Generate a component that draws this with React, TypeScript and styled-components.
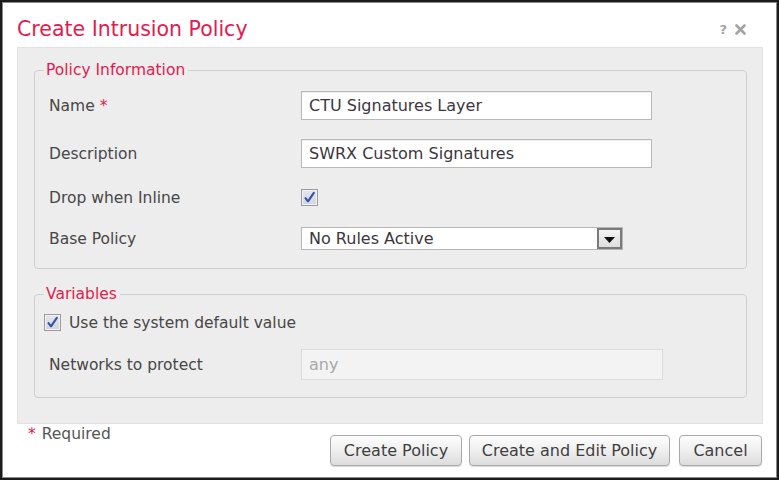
import React from "react";
import styled, { createGlobalStyle } from "styled-components";

const GlobalStyle = createGlobalStyle`
  html, body { margin: 0; padding: 0; background: #ffffff; }
  body { font-family: "DejaVu Sans", Verdana, sans-serif; }
  * { box-sizing: border-box; }
`;

const CRIMSON = "#e31b4f";

const Frame = styled.div`
  width: 779px;
  height: 480px;
  border: 2px solid #1b1b1b;
  box-shadow: inset 0 0 0 1px #8a8a8a;
  background: #ffffff;
  display: flex;
  flex-direction: column;
  padding: 1px 1px 0 1px;
`;

const Header = styled.div`
  height: 44px;
  display: flex;
  align-items: center;
  justify-content: space-between;
  padding: 0 30px 0 14px;
`;

const Title = styled.h1`
  margin: 0;
  font-weight: normal;
  font-size: 20.5px;
  color: ${CRIMSON};
  line-height: 24px;
  padding-top: 8px;
`;

const HeaderTools = styled.div`
  display: flex;
  align-items: center;
  gap: 8px;
  padding-top: 8px;
  color: #a3a3a3;
  font-weight: bold;
  font-size: 13px;
`;

const Panel = styled.div`
  margin: 0 13px 0 14px;
  background: #ededed;
  border: 1px solid #e2e2e2;
  padding: 13px 15px 25px 16px;
  display: flex;
  flex-direction: column;
  gap: 16px;
`;

const Group = styled.fieldset<{ $top: number; $bottom: number }>`
  margin: 0;
  border: 1px solid #cfcfcf;
  border-radius: 4px;
  padding: ${(p) => p.$top}px 14px ${(p) => p.$bottom}px 14px;
  min-width: 0;
`;

const Legend = styled.legend`
  color: ${CRIMSON};
  font-size: 15.5px;
  line-height: 18px;
  padding: 0 3px 0 2px;
  margin-left: -5px;
`;

const FormGrid = styled.div`
  display: grid;
  grid-template-columns: 252px 1fr;
  row-gap: 19px;
  align-items: center;
`;

const Label = styled.div`
  font-size: 15.5px;
  color: #474747;
  line-height: 20px;
`;

const Star = styled.span`
  color: ${CRIMSON};
`;

const TextInput = styled.div<{ $width: number; $disabled?: boolean }>`
  width: ${(p) => p.$width}px;
  height: ${(p) => (p.$disabled ? 31 : 29)}px;
  border: 1px solid ${(p) => (p.$disabled ? "#dcdcdc" : "#b9b9b9")};
  background: ${(p) => (p.$disabled ? "#f3f3f3" : "#ffffff")};
  box-shadow: ${(p) => (p.$disabled ? "none" : "inset 0 1px 1px rgba(0,0,0,0.08)")};
  color: ${(p) => (p.$disabled ? "#a8a8a8" : "#3b3640")};
  font-size: 16px;
  line-height: ${(p) => (p.$disabled ? 29 : 27)}px;
  padding-left: 7px;
  white-space: nowrap;
`;

const CheckRow = styled.div`
  height: 21px;
  display: flex;
  align-items: center;
`;

const Box = styled.span`
  width: 17px;
  height: 17px;
  border: 1px solid #9c9c9c;
  background: linear-gradient(#e4e6ee, #d2d5e0);
  box-shadow: inset 0 0 0 1px #f2f2f5;
  display: inline-flex;
  align-items: center;
  justify-content: center;
  flex: none;
`;

const Select = styled.div`
  width: 322px;
  height: 23px;
  border: 1px solid #b5b5b5;
  background: #ffffff;
  display: flex;
  align-items: center;
  justify-content: space-between;
  font-size: 16px;
  color: #3b3640;
  padding-left: 7px;
`;

const SelectButton = styled.span`
  width: 25px;
  height: 21px;
  border: 2px solid #7a7a7a;
  background: linear-gradient(#f4f4f4, #dedede);
  display: inline-flex;
  align-items: center;
  justify-content: center;
  padding-top: 3px;
`;

const DefaultRow = styled.div`
  height: 21px;
  display: flex;
  align-items: center;
  gap: 8px;
  margin-left: -5px;
  margin-bottom: 16px;
  font-size: 15.5px;
  color: #474747;
`;

const Footer = styled.div`
  display: flex;
  justify-content: space-between;
  padding: 0 14px 0 25px;
`;

const Required = styled.div`
  font-size: 15.5px;
  color: #555555;
  line-height: 18px;
  padding-top: 1px;
  display: flex;
  gap: 6px;
`;

const Buttons = styled.div`
  display: flex;
  padding-top: 11px;
`;

const Button = styled.button<{ $width: number; $gap?: number }>`
  width: ${(p) => p.$width}px;
  margin-left: ${(p) => p.$gap ?? 0}px;
  height: 31px;
  padding: 0;
  font-family: "DejaVu Sans", Verdana, sans-serif;
  font-size: 16px;
  color: #3f3f3f;
  border: 1px solid #a9a9a9;
  border-radius: 4px;
  background: linear-gradient(#fdfdfd 0%, #efefef 50%, #dcdcdc 100%);
  box-shadow: 0 1px 1px rgba(0,0,0,0.15);
  cursor: pointer;
`;

const Check = () => (
  <Box>
    <svg width="13" height="13" viewBox="0 0 13 13">
      <path d="M2.5 7.2 L5 10.3 L10.8 1.8" fill="none" stroke="#3552a8" strokeWidth="2.1" strokeLinecap="round" strokeLinejoin="round" />
    </svg>
  </Box>
);

export default function App() {
  return (
    <>
      <GlobalStyle />
      <Frame>
        <Header>
          <Title>Create Intrusion Policy</Title>
          <HeaderTools>
            <span>?</span>
            <svg width="11" height="11" viewBox="0 0 11 11">
              <path d="M1.5 1.5 L9.5 9.5 M9.5 1.5 L1.5 9.5" stroke="#a3a3a3" strokeWidth="2.6" strokeLinecap="round" />
            </svg>
          </HeaderTools>
        </Header>
        <Panel>
          <Group $top={12} $bottom={18}>
            <Legend>Policy Information</Legend>
            <FormGrid>
              <Label>
                Name <Star>*</Star>
              </Label>
              <TextInput $width={351}>CTU Signatures Layer</TextInput>
              <Label>Description</Label>
              <TextInput $width={351}>SWRX Custom Signatures</TextInput>
              <Label>Drop when Inline</Label>
              <CheckRow>
                <Check />
              </CheckRow>
              <Label>Base Policy</Label>
              <Select>
                <span>No Rules Active</span>
                <SelectButton>
                  <svg width="11" height="6" viewBox="0 0 11 6">
                    <path d="M0 0 H11 L5.5 6 Z" fill="#111" />
                  </svg>
                </SelectButton>
              </Select>
            </FormGrid>
          </Group>
          <Group $top={9} $bottom={17}>
            <Legend>Variables</Legend>
            <DefaultRow>
              <Check />
              <span>Use the system default value</span>
            </DefaultRow>
            <FormGrid>
              <Label>Networks to protect</Label>
              <TextInput $width={362} $disabled>
                any
              </TextInput>
            </FormGrid>
          </Group>
        </Panel>
        <Footer>
          <Required>
            <Star>*</Star>
            <span>Required</span>
          </Required>
          <Buttons>
            <Button $width={132}>Create Policy</Button>
            <Button $width={201} $gap={7}>Create and Edit Policy</Button>
            <Button $width={83} $gap={9}>Cancel</Button>
          </Buttons>
        </Footer>
      </Frame>
    </>
  );
}
